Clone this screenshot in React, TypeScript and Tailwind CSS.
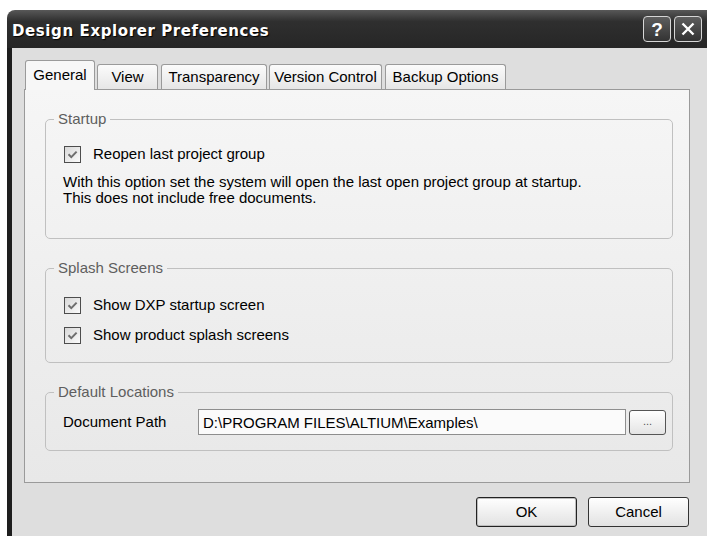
import React, { useState } from 'react';

const tabs = [
  { name: 'General', w: 'w-[70px]', ml: 'ml-[1px]' },
  { name: 'View', w: 'w-[61px]', ml: 'ml-[2px]' },
  { name: 'Transparency', w: 'w-[106px]', ml: 'ml-[3px]' },
  { name: 'Version Control', w: 'w-[113px]', ml: 'ml-[2px]' },
  { name: 'Backup Options', w: 'w-[121px]', ml: 'ml-[3px]' },
];

const CheckRow = ({ label, checked, onToggle }: { label: string; checked: boolean; onToggle: () => void }) => (
  <div className="flex items-center h-[18px] gap-[12px] cursor-default" onClick={onToggle}>
    <span className="flex items-center justify-center w-[17px] h-[17px] border border-[#4d4d4d] bg-linear-to-br from-[#d8d8d8] to-[#fbfbfb]">
      {checked && (
        <svg width="11" height="11" viewBox="0 0 11 11">
          <path d="M1.5 5.3 L4.3 8.1 L9.6 2.6" fill="none" stroke="#6e6e6e" strokeWidth="2" />
        </svg>
      )}
    </span>
    <span>{label}</span>
  </div>
);

const App = () => {
  const [active, setActive] = useState('General');
  const [reopen, setReopen] = useState(true);
  const [dxpSplash, setDxpSplash] = useState(true);
  const [productSplash, setProductSplash] = useState(true);
  const [docPath, setDocPath] = useState('D:\\PROGRAM FILES\\ALTIUM\\Examples\\');

  return (
    <div className="w-[707px] h-[536px] bg-white overflow-hidden pt-[10px] pl-[7px] font-['Liberation_Sans',Arial,sans-serif] text-[15px] text-black">
      <div className="w-[700px] h-[526px] flex flex-col rounded-tl-[8px] overflow-hidden">
        {/* title bar */}
        <div className="h-[38px] shrink-0 flex items-center justify-between pl-[5px] pr-[5px] bg-linear-to-b from-[#585858] via-[#2f2f2f] via-30% to-[#262626]">
          <span className="pt-[5px] font-['DejaVu_Sans',sans-serif] font-bold text-[15px] tracking-[0.6px] text-white [text-shadow:1px_1px_1px_#000]">
            Design Explorer Preferences
          </span>
          <div className="flex gap-[3px]">
            <button className="w-[28px] h-[26px] rounded-[4px] border-[1.5px] border-[#d6d6d6] bg-linear-to-b from-[#5e5e5e] to-[#333] flex items-center justify-center text-white font-bold text-[19px] leading-none">
              ?
            </button>
            <button className="w-[28px] h-[26px] rounded-[4px] border-[1.5px] border-[#d6d6d6] bg-linear-to-b from-[#5e5e5e] to-[#333] flex items-center justify-center">
              <svg width="16" height="16" viewBox="0 0 16 16">
                <path d="M2.5 2.5 L13.5 13.5 M13.5 2.5 L2.5 13.5" stroke="#fff" strokeWidth="2.4" />
              </svg>
            </button>
          </div>
        </div>

        {/* dialog body */}
        <div className="flex-1 bg-[#dedede] border-l-[5px] border-[#1e1e1e] pl-[12px] pt-[12px]">
          <div className="flex items-end h-[29px]">
            {tabs.map((t) =>
              t.name === active ? (
                <div
                  key={t.name}
                  className={`${t.w} ${t.ml} h-[30px] -mb-px relative z-10 flex items-center justify-center pb-[1px] border border-b-0 border-[#9a9a9a] rounded-t-[3px] bg-[#f7f7f7]`}
                >
                  {t.name}
                </div>
              ) : (
                <div
                  key={t.name}
                  onClick={() => setActive(t.name)}
                  className={`${t.w} ${t.ml} h-[25px] flex items-center justify-center border border-b-0 border-[#9a9a9a] rounded-t-[3px] bg-linear-to-b from-[#fbfbfb] to-[#e6e6e6] cursor-default`}
                >
                  {t.name}
                </div>
              )
            )}
          </div>

          <div className="w-[666px] h-[394px] border border-[#9a9a9a] bg-linear-to-b from-[#f6f6f6] to-[#e8e8e8] pt-[21px] pl-[20px]">
            <fieldset className="w-[628px] h-[128px] border border-[#c0c0c0] rounded-[5px]">
              <legend className="ml-[8px] px-[4px] leading-[16px] text-[#5e5e5e]">Startup</legend>
              <div className="pt-[18px] pl-[18px]">
                <CheckRow label="Reopen last project group" checked={reopen} onToggle={() => setReopen(!reopen)} />
                <p className="mt-[11px] -ml-px leading-[16px]">
                  With this option set the system will open the last open project group at startup.
                  <br />
                  This does not include free documents.
                </p>
              </div>
            </fieldset>

            <fieldset className="mt-[21px] w-[628px] h-[103px] border border-[#c0c0c0] rounded-[5px]">
              <legend className="ml-[8px] px-[4px] leading-[16px] text-[#5e5e5e]">Splash Screens</legend>
              <div className="pt-[20px] pl-[18px] flex flex-col gap-[12px]">
                <CheckRow label="Show DXP startup screen" checked={dxpSplash} onToggle={() => setDxpSplash(!dxpSplash)} />
                <CheckRow label="Show product splash screens" checked={productSplash} onToggle={() => setProductSplash(!productSplash)} />
              </div>
            </fieldset>

            <fieldset className="mt-[21px] w-[628px] h-[67px] border border-[#c0c0c0] rounded-[5px]">
              <legend className="ml-[8px] px-[4px] leading-[16px] text-[#5e5e5e]">Default Locations</legend>
              <div className="pt-[9px] pl-[17px] flex items-center">
                <span className="w-[135px]">Document Path</span>
                <input
                  value={docPath}
                  onChange={(e) => setDocPath(e.target.value)}
                  className="w-[428px] h-[26px] border border-[#8e8e8e] bg-[#fbfbfb] px-[4px] outline-none"
                />
                <button className="ml-[3px] w-[37px] h-[25px] rounded-[3px] border border-[#555] bg-linear-to-b from-white to-[#e4e4e4] text-[11px] text-[#555] leading-none pb-[2px]">
                  ...
                </button>
              </div>
            </fieldset>
          </div>

          <div className="w-[665px] mt-[14px] flex justify-end gap-[11px]">
            <button className="w-[101px] h-[30px] rounded-[3px] border border-[#222] bg-linear-to-b from-white to-[#e2e2e2] shadow-[inset_0_0_0_1px_#bdbdbd]">
              OK
            </button>
            <button className="w-[101px] h-[30px] rounded-[3px] border border-[#333] bg-linear-to-b from-white to-[#e2e2e2]">
              Cancel
            </button>
          </div>
        </div>
      </div>
    </div>
  );
};

export default App;
